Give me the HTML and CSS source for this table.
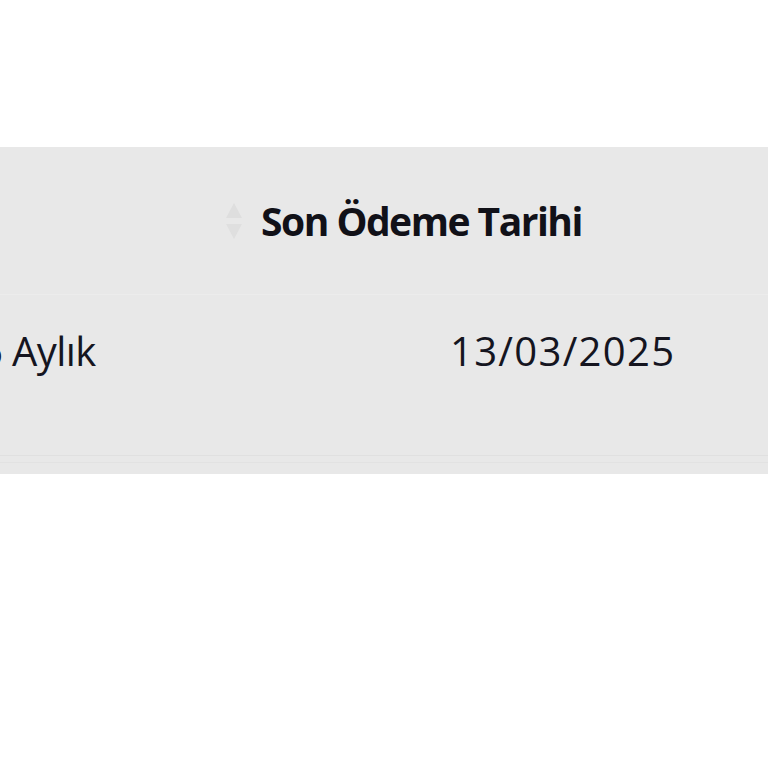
FILE: index.html
```html
<!DOCTYPE html>
<html lang="tr">
<head>
<meta charset="utf-8">
<link rel="stylesheet" href="styles.css">
</head>
<body>
<div class="page">
  <div class="table">
    <div class="thead">
      <div class="th th-empty"></div>
      <div class="th th-sort">
        <svg class="sort" width="20" height="40" viewBox="0 0 20 40">
          <path d="M10 2 L18 17 L2 17 Z" fill="#dedede"/>
          <path d="M10 38 L18 23 L2 23 Z" fill="#dfdfdf"/>
        </svg>
        <span class="th-label">Son Ödeme Tarihi</span>
      </div>
    </div>
    <div class="tbody">
      <div class="td td-period">6 Aylık</div>
      <div class="td td-date">13/03/2025</div>
    </div>
    <div class="tfoot-lines">
      <div class="line l1"></div>
      <div class="line l2"></div>
    </div>
  </div>
</div>
</body>
</html>
```

FILE: styles.css
```css
html, body {
  margin: 0;
  padding: 0;
  background: #ffffff;
}
.page {
  padding-top: 147px;
  font-family: "Open Sans", "Noto Sans", sans-serif;
  color: #15151f;
}
.table {
  background: #e8e8e8;
}
.thead {
  display: grid;
  grid-template-columns: 224px 1fr;
  height: 147px;
  border-bottom: 1px solid #ececec;
}
.th-sort {
  display: flex;
  align-items: center;
  gap: 17px;
}
.sort {
  display: block;
}
.th-label {
  font-size: 39px;
  font-weight: 700;
  letter-spacing: -1.5px;
  color: #111118;
}
.tbody {
  display: grid;
  grid-template-columns: 450px 1fr;
  height: 160px;
}
.td {
  font-size: 40px;
  font-weight: 400;
  padding-top: 28px;
  letter-spacing: -0.6px;
}
.td-date {
  letter-spacing: 1.3px;
}
.td-period {
  margin-left: -20px;
}
.tfoot-lines {
  height: 19px;
  display: flex;
  flex-direction: column;
}
.line {
  height: 1px;
}
.l1 {
  background: #e0e0e0;
  margin-top: 0;
}
.l2 {
  background: #e2e2e2;
  margin-top: 6px;
}
```
